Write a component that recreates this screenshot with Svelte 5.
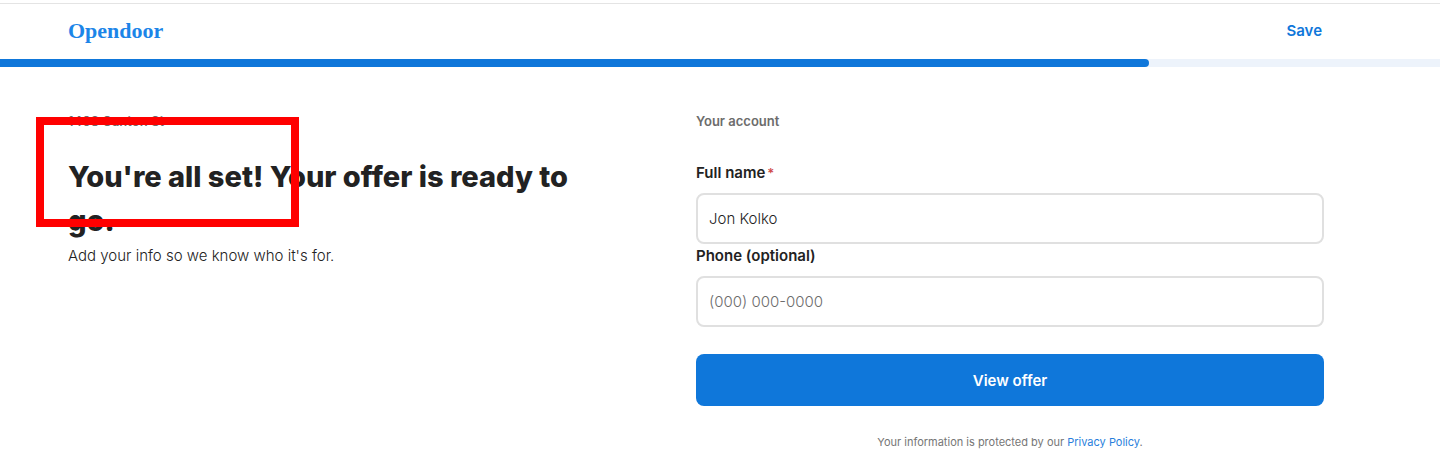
<script>
  let name = $state('Jon Kolko');
  let phone = $state('');
  const progress = 79.8;
</script>

<div class="page">
  <header>
    <a class="logo" href="#home">Opendoor</a>
    <button type="button" class="save">Save</button>
  </header>

  <div class="progress" role="progressbar" aria-label="Progress" aria-valuenow={progress} aria-valuemin="0" aria-valuemax="100">
    <div class="bar" style="width: {progress}%"></div>
  </div>

  <main>
    <section class="intro">
      <p class="eyebrow">1408 Canton St</p>
      <h1>You're all set! Your offer is ready to go.</h1>
      <p class="lead">Add your info so we know who it's for.</p>
      <div class="highlight"></div>
    </section>

    <form onsubmit={(e) => e.preventDefault()}>
      <p class="eyebrow">Your account</p>
      <label for="name">Full name<span class="star">*</span></label>
      <input id="name" type="text" required bind:value={name} />
      <label for="phone">Phone (optional)</label>
      <input id="phone" type="tel" placeholder="(000) 000-0000" bind:value={phone} />
      <button type="submit" class="submit">View offer</button>
      <p class="note">Your information is protected by our <a href="#privacy">Privacy Policy</a>.</p>
    </form>
  </main>
</div>

<style>
  :global(body) {
    background: #fff;
  }
  .page {
    padding-top: 3px;
    font-family: Inter, 'Liberation Sans', sans-serif;
    color: #222;
  }
  .page * {
    box-sizing: border-box;
  }
  p, h1 {
    margin: 0;
  }
  a {
    text-decoration: none;
  }
  button {
    border: 0;
    font: inherit;
    font-weight: 600;
    cursor: pointer;
  }
  header {
    display: flex;
    align-items: center;
    justify-content: space-between;
    height: 56px;
    padding: 0 118px 2px 68px;
    border-top: 1px solid #e4e4e4;
  }
  .logo {
    color: #1c85e8;
    font: bold 22px/24px 'Liberation Serif', serif;
  }
  .save {
    padding: 0;
    background: none;
    color: #0f77da;
    font-size: 15px;
    line-height: 20px;
  }
  .progress {
    height: 8px;
    background: #edf3fb;
  }
  .bar {
    height: 100%;
    background: #0f77da;
    border-radius: 0 4px 4px 0;
  }
  main {
    display: grid;
    grid-template-columns: 1fr 1fr;
    padding: 44px 116px 0 68px;
  }
  .intro {
    position: relative;
    padding-right: 104px;
  }
  .eyebrow {
    color: #6c6c6c;
    font-size: 13px;
    font-weight: 600;
    line-height: 20px;
    margin-bottom: 24px;
  }
  h1 {
    font-size: 29px;
    font-weight: 800;
    line-height: 44px;
  }
  .lead {
    margin-top: 3px;
    font-size: 15px;
    font-weight: 300;
    line-height: 20px;
  }
  .highlight {
    position: absolute;
    top: 6px;
    left: -32px;
    width: 263px;
    height: 110px;
    border: 8px solid #f00;
    pointer-events: none;
  }
  form {
    display: flex;
    flex-direction: column;
  }
  form .eyebrow {
    margin-bottom: 30px;
  }
  label {
    font-size: 15px;
    font-weight: 600;
    line-height: 24px;
    padding-bottom: 8px;
  }
  .star {
    margin-left: 2px;
    color: #d04a4a;
    font-size: 13px;
  }
  input {
    width: 100%;
    height: 51px;
    padding: 0 11px;
    border: 2px solid #e0e0e0;
    border-radius: 8px;
    background: #fff;
    color: #222;
    font: 300 15px/20px Inter, 'Liberation Sans', sans-serif;
  }
  input::placeholder {
    color: #6c6c6c;
    opacity: 1;
  }
  .submit {
    height: 52px;
    margin-top: 27px;
    border-radius: 8px;
    background: #0f77da;
    color: #fff;
    font-size: 15px;
  }
  .note {
    margin-top: 28px;
    color: #767676;
    font-size: 11px;
    line-height: 16px;
    text-align: center;
  }
  .note a {
    color: #2a7fdc;
  }
</style>
